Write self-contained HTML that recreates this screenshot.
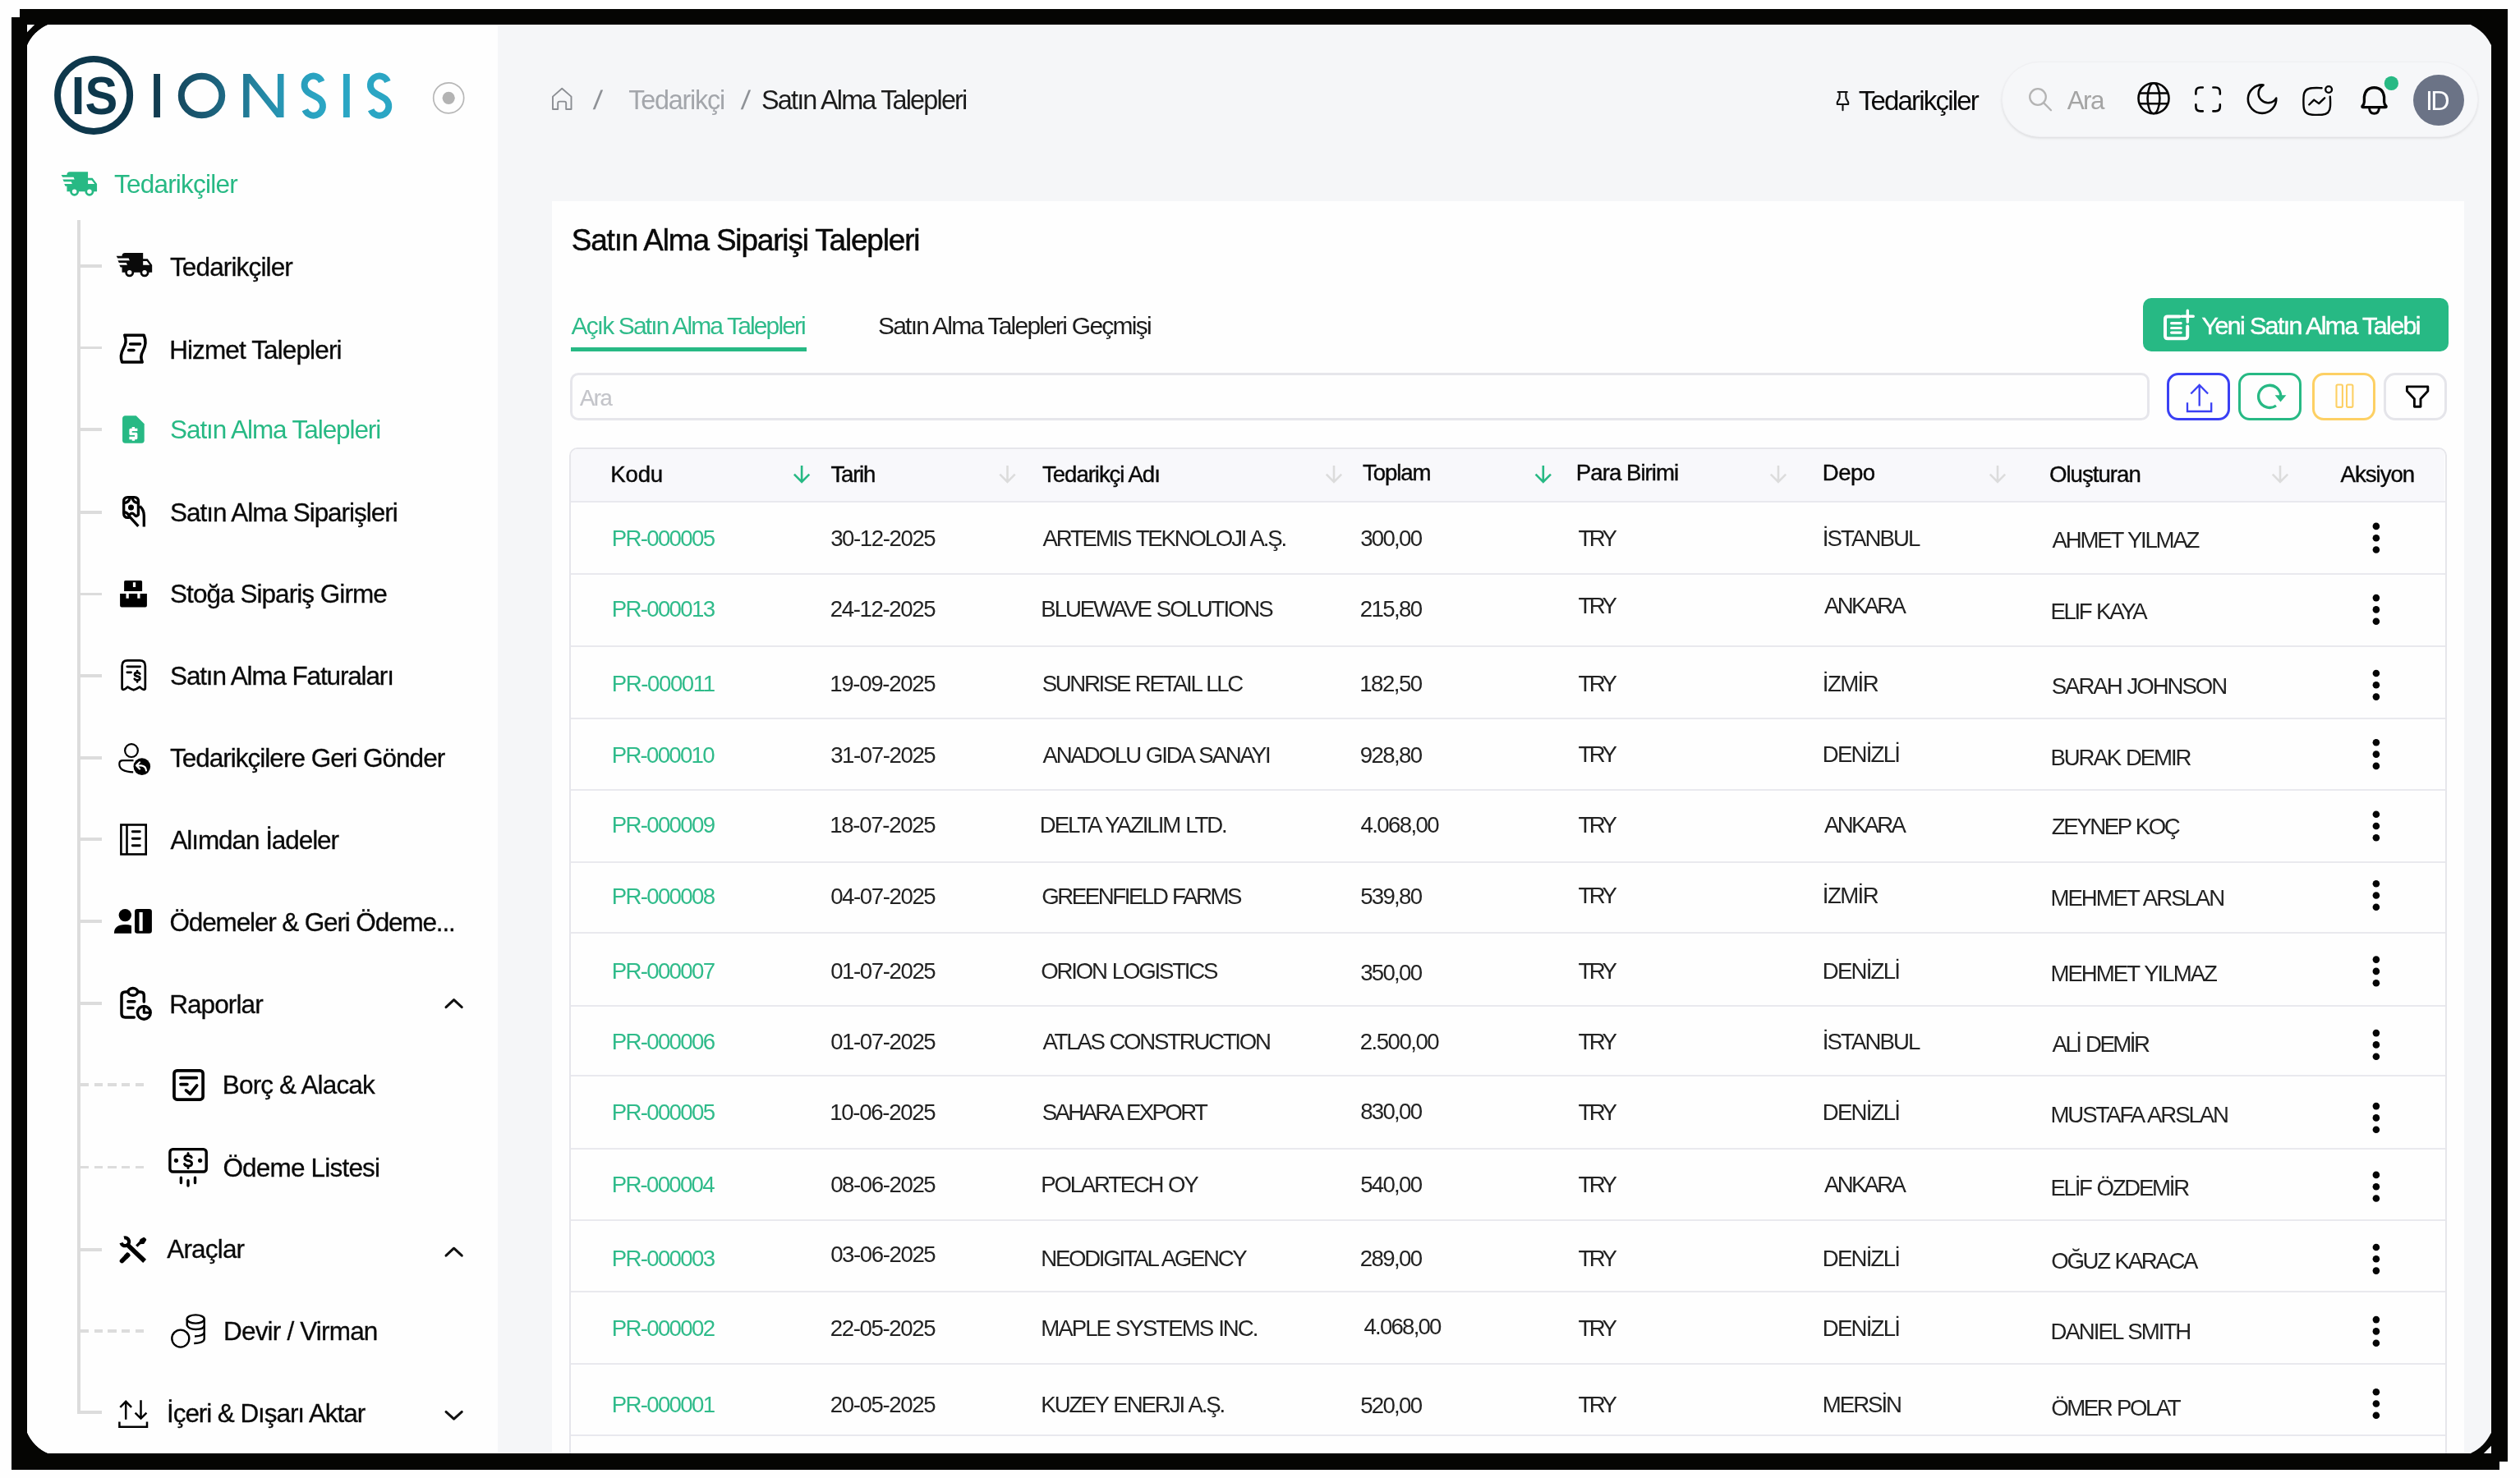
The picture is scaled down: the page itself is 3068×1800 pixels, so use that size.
<!DOCTYPE html>
<html lang="tr"><head><meta charset="utf-8"><title>Satın Alma Talepleri</title><style>
html,body{margin:0;padding:0}
body{width:3068px;height:1800px;background:#fefefe;overflow:hidden;position:relative;font-family:"Liberation Sans",sans-serif}
.a{position:absolute}
#fa{left:24px;top:11px;width:3029px;height:1769px;background:#050503}
#fb{left:14px;top:21px;width:3029px;height:1769px;background:#050503}
#app{left:29.2px;top:26.2px;width:3007.6px;height:1747.6px;border-radius:49px;background:#f5f6f8;overflow:hidden;transform:translateZ(0)}
#w{left:-29.2px;top:-26.2px;width:3068px;height:1800px}
#side{left:33px;top:30px;width:573px;height:1740px;background:#fefefe}
#card{left:672px;top:245px;width:2328px;height:1600px;background:#fefefe}
.t{position:absolute;white-space:nowrap;line-height:1}
.sk{transform:skewX(-6deg) scaleX(1.1);transform-origin:50% 60%}
.bar{position:absolute;background:#050503}
#txt{left:0;top:0;width:3068px;height:1800px;will-change:transform}
#vline{left:94.1px;top:268px;width:3.8px;height:1454.4px;background:#dcdcdc}
.br{position:absolute;left:97.9px;width:26px;height:3.9px;background:#dcdcdc}
.dbr{position:absolute;left:97.9px;width:77px;height:3.9px;background:repeating-linear-gradient(90deg,#dcdcdc 0,#dcdcdc 10.3px,transparent 10.3px,transparent 16.65px)}
#pill{left:2437px;top:75px;width:578px;height:90px;border-radius:46px;background:#f6f7f9;border:1px solid #f0f0f3;box-shadow:0 1.5px 3px rgba(0,0,0,.10)}
#avatar{left:2938px;top:90.8px;width:62px;height:62px;border-radius:50%;background:#6b7386}
#tabline{left:695px;top:423px;width:287.3px;height:5px;background:#27b984}
#newbtn{left:2609px;top:362.8px;width:372px;height:65px;border-radius:10px;background:#27b984}
#search{left:693.7px;top:453.8px;width:1917.6px;height:52.2px;border:3px solid #e6e6eb;border-radius:10px;background:#fefefe}
.ab{position:absolute;top:454px;width:70.8px;height:52px;border-radius:14px;border:3px solid #000;background:#fefefe}
#table{left:693.4px;top:545.2px;width:2281.8px;height:1300px;border:2px solid #e6e6eb;border-radius:10px;background:#fefefe;overflow:hidden}
#thead{left:0;top:0;width:2281px;height:64px;background:#f8f8fb}
.rl{position:absolute;left:695px;width:2282px;height:2px;background:#e9e9ee}
</style></head><body>
<div id="fa" class="a"></div><div id="fb" class="a"></div>
<div id="app" class="a"><div id="w" class="a">
<div id="side" class="a"></div><div id="vline" class="a"></div>
<div class="br" style="top:322.0px"></div>
<div class="br" style="top:421.6px"></div>
<div class="br" style="top:521.0px"></div>
<div class="br" style="top:622.0px"></div>
<div class="br" style="top:721.6px"></div>
<div class="br" style="top:821.0px"></div>
<div class="br" style="top:921.0px"></div>
<div class="br" style="top:1020.3px"></div>
<div class="br" style="top:1119.8px"></div>
<div class="br" style="top:1219.8px"></div>
<div class="br" style="top:1519.8px"></div>
<div class="br" style="top:1718.4px"></div>
<div class="dbr" style="top:1318.9px"></div>
<div class="dbr" style="top:1419.6px"></div>
<div class="dbr" style="top:1618.9px"></div>
<div class="a" style="left:606px;top:30px;width:2427px;height:1.3px;background:#fdfdfe"></div><div class="a" style="left:3031.7px;top:30px;width:1.3px;height:1740px;background:#fdfdfe"></div><div class="a" style="left:606px;top:1768.8px;width:2427px;height:1.2px;background:#fdfdfe"></div>
<div id="pill" class="a"></div><div id="avatar" class="a"></div>
<div id="card" class="a"></div>
<div id="tabline" class="a"></div><div id="newbtn" class="a"></div><div id="search" class="a"></div>
<div class="ab" style="left:2637.9px;border-color:#3a40f4"></div>
<div class="ab" style="left:2725.2px;border-color:#27b984"></div>
<div class="ab" style="left:2815px;border-color:#fdd064"></div>
<div class="ab" style="left:2902.3px;border-color:#e5e5ea"></div>
<div id="table" class="a"><div id="thead" class="a"></div></div>
<div class="rl" style="top:610.3px"></div>
<div class="rl" style="top:697.6px"></div>
<div class="rl" style="top:785.7px"></div>
<div class="rl" style="top:873.5px"></div>
<div class="rl" style="top:961.4px"></div>
<div class="rl" style="top:1048.8px"></div>
<div class="rl" style="top:1135.4px"></div>
<div class="rl" style="top:1223.8px"></div>
<div class="rl" style="top:1308.5px"></div>
<div class="rl" style="top:1397.6px"></div>
<div class="rl" style="top:1484.7px"></div>
<div class="rl" style="top:1571.9px"></div>
<div class="rl" style="top:1659.5px"></div>
<div class="rl" style="top:1746.6px"></div>
<svg class="a" style="left:0;top:0" width="3068" height="1800" viewBox="0 0 3068 1800"><defs><linearGradient id="lg" gradientUnits="userSpaceOnUse" x1="187" y1="0" x2="392" y2="0">
<stop offset="0" stop-color="#113a4e"/><stop offset="0.35" stop-color="#1c607a"/><stop offset="0.75" stop-color="#2795b3"/><stop offset="1" stop-color="#2ba6c4"/></linearGradient></defs>
<circle cx="114.1" cy="115.9" r="44.05" fill="none" stroke="#0e384c" stroke-width="7.9"/>
<text transform="translate(86.87,139.4) scale(0.922,1)" font-family="Liberation Sans" font-weight="bold" font-size="64.7" fill="#0e384c">IS</text>
<g fill="none" stroke="url(#lg)" stroke-width="7.9">
<path d="M191.05 90V143"/>
<ellipse cx="245.5" cy="116.5" rx="24.75" ry="23.75"/>
<path d="M421.85 90V143"/>
<path d="M391.6 99.4A10.9 10.9 0 1 0 373.9 111.3C377.4 114.8 386.2 117.9 389.7 121.4A11.3 11.3 0 1 1 371.3 133.8"/>
<path d="M471.9 99.4A10.9 10.9 0 1 0 454.2 111.3C457.7 114.8 466.5 117.9 470.0 121.4A11.3 11.3 0 1 1 451.6 133.8"/>
</g>
<path fill="url(#lg)" d="M296.1 90H304.6L337.9 132V90H345.5V143H337L303.6 101V143H296.1Z"/>
<circle cx="546.2" cy="119.3" r="18.5" fill="none" stroke="#b7b7b7" stroke-width="1.7"/><circle cx="546.2" cy="119.3" r="7.6" fill="#b3b3b3"/>
<path transform="translate(74.1,202.0) scale(1.832)" fill="#27b984" d="M3 13.5L2.25 12H7.5L6.9 10.5H2L1.25 9H9.05L8.45 7.5H1.11L.25 6H4A2 2 0 0 1 6 4H18V8H21L24 12V17H22A3 3 0 0 1 19 20A3 3 0 0 1 16 17H12A3 3 0 0 1 9 20A3 3 0 0 1 6 17H4V13.5H3M19 18.5A1.5 1.5 0 0 0 20.5 17A1.5 1.5 0 0 0 19 15.5A1.5 1.5 0 0 0 17.5 17A1.5 1.5 0 0 0 19 18.5M20.5 9.5H18V12H22.46L20.5 9.5M9 18.5A1.5 1.5 0 0 0 10.5 17A1.5 1.5 0 0 0 9 15.5A1.5 1.5 0 0 0 7.5 17A1.5 1.5 0 0 0 9 18.5Z"/>
<path transform="translate(141.2,300.7) scale(1.832)" fill="#0a0a0a" d="M3 13.5L2.25 12H7.5L6.9 10.5H2L1.25 9H9.05L8.45 7.5H1.11L.25 6H4A2 2 0 0 1 6 4H18V8H21L24 12V17H22A3 3 0 0 1 19 20A3 3 0 0 1 16 17H12A3 3 0 0 1 9 20A3 3 0 0 1 6 17H4V13.5H3M19 18.5A1.5 1.5 0 0 0 20.5 17A1.5 1.5 0 0 0 19 15.5A1.5 1.5 0 0 0 17.5 17A1.5 1.5 0 0 0 19 18.5M20.5 9.5H18V12H22.46L20.5 9.5M9 18.5A1.5 1.5 0 0 0 10.5 17A1.5 1.5 0 0 0 9 15.5A1.5 1.5 0 0 0 7.5 17A1.5 1.5 0 0 0 9 18.5Z"/>
<g transform="translate(130,380)" fill="none" stroke="#000" stroke-width="3.5" stroke-linecap="round" stroke-linejoin="round"><path d="M21.8 28.2H45.2C48.6 36 47 42 44 47.5C41 53 41 56.5 43.2 61.1H18.6C16.2 55 17.2 50 20.2 44.5C23.2 39 24.2 35 21.8 28.2Z"/><path d="M28.6 39H40.6M26.6 46.6H33"/></g>
<g transform="translate(142.4,502.8) scale(1.665,1.685)"><path fill="#27b984" d="M14 2H6C4.9 2 4 2.9 4 4V20C4 21.1 4.9 22 6 22H18C19.1 22 20 21.1 20 20V8Z"/><path fill="#fff" transform="translate(0,1.2)" d="M15 12h-4v1h3c.55 0 1 .45 1 1v3c0 .55-.45 1-1 1h-1v1h-2v-1H9v-2h4v-1h-3c-.55 0-1-.45-1-1v-3c0-.55.45-1 1-1h1V9h2v1h2v2z"/></g>
<g transform="translate(130,580)" fill="none" stroke="#000" stroke-width="3.3" stroke-linecap="round" stroke-linejoin="round"><path d="M38.4 46.6V30.5Q38.4 25.6 33.5 25.6H25.6Q20.7 25.6 20.7 30.5V45.5Q20.7 50.4 25.6 50.4H26.6"/><path d="M20.7 32.6Q27.8 32 28.3 25.6M38.4 32.6Q31.6 32 31 25.6M20.7 43.6Q26 44 27.3 49"/><path d="M27.8 46.8Q30.6 43.6 33.6 46.8Q36.4 50.6 38.4 46.6"/><path d="M27.2 48.6L38.4 60.8" stroke-linecap="butt"/><path d="M40.2 36.6Q45.3 41 45.3 48V61.6" stroke-linecap="butt"/></g><circle cx="159.5" cy="618" r="3.5" fill="#000"/>
<g transform="translate(130,680)" fill="#000"><path d="M22.6 26.9H41.6Q43.1 26.9 43.1 28.4V40H21.1V28.4Q21.1 26.9 22.6 26.9ZM31.9 29.2V34.9H35.1V29.2Z"/><path d="M16.1 43H23.5V48.7H26.8V43H37.3V48.7H40.5V43H48.9V57.5Q48.9 59.5 46.9 59.5H18.1Q16.1 59.5 16.1 57.5Z"/></g>
<g transform="translate(130,780)" fill="none" stroke="#000" stroke-width="2.7" stroke-linecap="round" stroke-linejoin="round"><path d="M18.6 58V31Q18.6 24.4 25.2 24.4H40.2Q46.8 24.4 46.8 31V58Q46.8 59.8 45 59.8Q43.5 59.8 40 56.6Q36.5 59 32.7 60.3Q29 59 25.5 56.6Q22 59.8 20.4 59.8Q18.6 59.8 18.6 58Z"/><path d="M24.8 31.8H40.6M24.8 38.8H29.6"/><path d="M40.3 40.6Q39.5 39.2 37.1 39.2Q34 39.2 34 41.3Q34 43.2 37.1 43.6Q40.4 44 40.4 46.2Q40.4 48.3 37.1 48.3Q34.6 48.3 33.8 46.8M37.1 37V39.2M37.1 48.3V50.4"/></g>
<g transform="translate(130,880)" fill="none" stroke="#000" stroke-width="2.2"><circle cx="30" cy="34.1" r="7.9"/><path d="M32.5 46.2H19.5Q15.3 46.2 15.3 50.4Q15.3 59.8 32.2 60.3"/><circle cx="42.8" cy="53.6" r="10.3" fill="#000" stroke="none"/><path d="M40 48.3L36 52.3L40 56.4M36.3 52.3H42Q47.5 52.8 48 58.4" stroke="#fff" stroke-width="2.2" stroke-linecap="round" stroke-linejoin="round"/></g>
<g transform="translate(130,980)" fill="none" stroke="#000" stroke-width="2.6"><rect x="17.4" y="24.5" width="30.3" height="35.9"/><path d="M24.5 24.5V60.4"/><path d="M31.3 32.8H40.3M31.3 41.2H40.3M31.3 49.7H40.3" stroke-linecap="round" stroke-width="2.9"/></g>
<g transform="translate(130,1080)" fill="#000"><circle cx="22.3" cy="34.6" r="7.7"/><path d="M8.9 56.8Q8.9 46 22.3 46Q27 46 30 47.2V56.8Z"/><path d="M37.2 26.9H51.7Q54.9 26.9 54.9 30.1V53.6Q54.9 56.8 51.7 56.8H37.2Q34 56.8 34 53.6V30.1Q34 26.9 37.2 26.9ZM39.5 31V53.8H43.7V31Z"/></g>
<g transform="translate(130,1180)" fill="none" stroke="#000" stroke-width="3.5" stroke-linecap="round" stroke-linejoin="round"><path d="M25.6 27.9H22.5Q18 27.9 18 32.4V54.5Q18 59 22.5 59H33.3M38 27.9H40.8Q45.3 27.9 45.3 32.4V40"/><ellipse cx="31.8" cy="27.9" rx="5.8" ry="4.3"/><path d="M25.9 39.7H33.9M25.9 47.5H32"/><circle cx="45.3" cy="53.3" r="7.9"/><path d="M45.3 47.6V53.3H51" stroke-width="3"/></g>
<g transform="translate(190,1280)" fill="none" stroke="#000" stroke-width="3.7" stroke-linecap="round" stroke-linejoin="round"><rect x="22" y="23.8" width="35.1" height="35.3" rx="3.6"/><path d="M30 32.7H49.3M30 40.6H37.9M36.4 47.9L41.6 52.2L49.7 41.9"/></g>
<g transform="translate(190,1380)" fill="none" stroke="#000" stroke-width="3.4" stroke-linecap="round" stroke-linejoin="round"><rect x="16.9" y="19.6" width="44.3" height="27.4" rx="3.6"/><path d="M30.4 54.2V60.6M39 57.7V64M47.5 54.2V60.6"/><path d="M43.2 29.6Q42.3 27.4 39 27.4Q34.9 27.4 34.9 30.3Q34.9 32.9 39 33.5Q43.5 34.1 43.5 37Q43.5 40 39 40Q35.6 40 34.6 37.6M39 24.6V27.4M39 40V42.6" stroke-width="3"/></g><circle cx="214.5" cy="1413.3" r="2.6" fill="#000"/><circle cx="243.6" cy="1413.3" r="2.6" fill="#000"/>
<g transform="translate(130,1480)" fill="none" stroke="#000"><path d="M26 36.8L46.1 55.9" stroke-width="5.6"/><path d="M21.0 27.5A4.9 4.9 0 1 1 17.5 33.7" stroke-width="4.3" fill="none"/><path d="M18.5 55.6L25.5 48.5" stroke-width="5.6" stroke-linecap="round"/><path d="M23 51L26.9 47" stroke-width="5.6"/><path d="M36.3 37.6L40.2 33.6" stroke-width="3.2"/><path d="M40 34L41.6 30.2L45.2 28.2L46.9 29.8L44.4 33.8Z" stroke-width="2.6" fill="#000" stroke-linejoin="round"/></g>
<g transform="translate(190,1580)" fill="none" stroke="#000" stroke-width="2.4"><ellipse cx="48.2" cy="26.5" rx="10.5" ry="5.1"/><path d="M37.7 26.5V34Q40 39 48.2 39Q58.7 39 58.7 33.5M58.7 26.5V50.5Q58.5 55.5 46.2 56M47 47.5Q58.5 47 58.7 42"/><circle cx="29.8" cy="50.1" r="10.5"/></g>
<g transform="translate(130,1680)" fill="none" stroke="#000" stroke-width="2.5"><path d="M23.2 48.7V27M16.3 33.9L23.2 26.9L30.1 33.9"/><path d="M41.5 25.2V47M34.6 40.7L41.5 47.6L48.4 40.7"/><path d="M15.4 51.4V57.8H49V51.4"/></g>
<g fill="none" stroke="#111" stroke-width="3" stroke-linecap="round" stroke-linejoin="round"><path d="M543 1226.6L552.6 1217.6L562.3 1226.6"/><path d="M543 1529.2L552.6 1520.2L562.3 1529.2"/><path d="M543 1719.4L552.6 1728.2L562.3 1719.4"/></g>
<path fill="none" stroke="#8b8e93" stroke-width="1.9" stroke-linejoin="round" d="M673 117.6L684.2 107.8L695.5 117.6V133H689.2V125.6Q689.2 123.6 687.2 123.6H681.2Q679.2 123.6 679.2 125.6V133H673Z"/>
<path fill="none" stroke="#111" stroke-width="2.1" stroke-linejoin="round" stroke-linecap="round" d="M2237.6 112H2248.8M2239.6 112V119.5L2236.8 124.5V127H2250.2V124.5L2247.4 119.5V112M2243.5 127V134.2"/>
<g fill="none" stroke="#b4b4b4" stroke-width="2.3" stroke-linecap="round"><circle cx="2481" cy="118" r="9.8"/><path d="M2488.2 125.4L2497 134.2"/></g>
<g fill="none" stroke="#050505" stroke-width="2.6"><circle cx="2622" cy="119.8" r="18.5"/><ellipse cx="2622" cy="119.8" rx="7.4" ry="18.5"/><path d="M2604.8 113.5H2639.2M2604.8 126.2H2639.2"/></g>
<g fill="none" stroke="#050505" stroke-width="2.6" stroke-linecap="round"><path d="M2673.4 114.6V112Q2673.4 106.5 2678.9 106.5H2681.8M2694.4 106.5H2697.3Q2702.8 106.5 2702.8 112V114.6M2702.8 127.4V130Q2702.8 135.4 2697.3 135.4H2694.4M2681.8 135.4H2678.9Q2673.4 135.4 2673.4 130V127.4"/></g>
<path fill="none" stroke="#050505" stroke-width="2.6" stroke-linejoin="round" d="M2755.6 103.5A17.2 17.2 0 1 0 2771.2 119.6A11.6 11.6 0 1 1 2755.6 103.5Z"/>
<g fill="none" stroke="#050505" stroke-width="2.4" stroke-linecap="round" stroke-linejoin="round"><path d="M2826.6 107.2Q2820 106.9 2815 107.2Q2805 107.6 2804.6 117.5Q2804.2 123.5 2804.6 129.5Q2805 139.3 2815 139.7Q2821 140.1 2827 139.7Q2836.6 139.3 2837 129.5Q2837.3 123.5 2836.8 117.6"/><circle cx="2835.1" cy="109" r="3.9"/><path d="M2811.3 127.5L2817.2 121.6L2823.2 126.1L2830.1 119.3"/></g>
<g fill="none" stroke="#050505" stroke-width="3.3" stroke-linejoin="round" stroke-linecap="round"><path d="M2890.5 106.6Q2901.2 106.8 2902.6 118V124Q2902.8 127.5 2905 129.3Q2905.6 130.6 2904 130.6H2877Q2875.4 130.6 2876 129.3Q2878.2 127.5 2878.4 124V118Q2879.8 106.8 2890.5 106.6Z"/><path d="M2884.6 132Q2885 138.2 2890.5 138.2Q2896 138.2 2896.4 132" stroke-width="3"/></g>
<circle cx="2911.4" cy="101.4" r="8.6" fill="#27b984"/>
<path fill="none" stroke="#27b984" stroke-width="2.6" d="M976.1 567V586.6M966.9 577.6L976.1 586.8L985.3000000000001 577.6"/>
<path fill="none" stroke="#dcdcdc" stroke-width="2.6" d="M1226.5 567V586.6M1217.3 577.6L1226.5 586.8L1235.7 577.6"/>
<path fill="none" stroke="#dcdcdc" stroke-width="2.6" d="M1624 567V586.6M1614.8 577.6L1624 586.8L1633.2 577.6"/>
<path fill="none" stroke="#27b984" stroke-width="2.6" d="M1878.8 567V586.6M1869.6 577.6L1878.8 586.8L1888.0 577.6"/>
<path fill="none" stroke="#dcdcdc" stroke-width="2.6" d="M2165 567V586.6M2155.8 577.6L2165 586.8L2174.2 577.6"/>
<path fill="none" stroke="#dcdcdc" stroke-width="2.6" d="M2432 567V586.6M2422.8 577.6L2432 586.8L2441.2 577.6"/>
<path fill="none" stroke="#dcdcdc" stroke-width="2.6" d="M2776 567V586.6M2766.8 577.6L2776 586.8L2785.2 577.6"/>
<g fill="none" stroke="#fff" stroke-linecap="round" stroke-linejoin="round"><path stroke-width="4" d="M2653.5 385.5H2639Q2636 385.5 2636 388.5V409.2Q2636 412.2 2639 412.2H2660.2Q2663.2 412.2 2663.2 409.2V397.5"/><path stroke-width="3.2" d="M2643.6 393.6H2655.2M2643.6 399.5H2655.2M2643.6 405.1H2655.2"/><path stroke-width="3.4" d="M2663.3 378.3V392.3M2656.3 385.3H2670.3"/></g>
<g fill="none" stroke="#3a40f4" stroke-width="2.3"><path d="M2677.7 494.6V469.4M2667.3 479.5L2677.7 469L2688.1 479.5"/><path d="M2663 490.2V501H2692.2V490.2"/></g>
<g><path fill="none" stroke="#27b984" stroke-width="3.3" d="M2776.8 482.9A13.6 13.6 0 1 0 2771 494"/><path fill="#27b984" d="M2769.6 481.2H2783.4L2776.5 489.6Z"/></g>
<g fill="none" stroke="#fdd064" stroke-width="2.1"><rect x="2844.5" y="468.5" width="7.4" height="27.4" rx="1.6"/><rect x="2857" y="468.5" width="7.4" height="27.4" rx="1.6"/></g>
<path fill="none" stroke="#050505" stroke-width="2.9" stroke-linejoin="round" d="M2930.4 470.9H2955.8V476.3L2947 485.8V495.2H2939.4V485.8L2930.4 476.3Z"/>
<circle cx="2892.9" cy="640.9" r="4.3" fill="#050505"/>
<circle cx="2892.9" cy="655.2" r="4.3" fill="#050505"/>
<circle cx="2892.9" cy="669.5" r="4.3" fill="#050505"/>
<circle cx="2892.9" cy="728.1" r="4.3" fill="#050505"/>
<circle cx="2892.9" cy="742.4" r="4.3" fill="#050505"/>
<circle cx="2892.9" cy="756.7" r="4.3" fill="#050505"/>
<circle cx="2892.9" cy="820.0" r="4.3" fill="#050505"/>
<circle cx="2892.9" cy="834.3" r="4.3" fill="#050505"/>
<circle cx="2892.9" cy="848.6" r="4.3" fill="#050505"/>
<circle cx="2892.9" cy="904.3" r="4.3" fill="#050505"/>
<circle cx="2892.9" cy="918.6" r="4.3" fill="#050505"/>
<circle cx="2892.9" cy="932.9" r="4.3" fill="#050505"/>
<circle cx="2892.9" cy="991.7" r="4.3" fill="#050505"/>
<circle cx="2892.9" cy="1006.0" r="4.3" fill="#050505"/>
<circle cx="2892.9" cy="1020.3" r="4.3" fill="#050505"/>
<circle cx="2892.9" cy="1076.2" r="4.3" fill="#050505"/>
<circle cx="2892.9" cy="1090.5" r="4.3" fill="#050505"/>
<circle cx="2892.9" cy="1104.8" r="4.3" fill="#050505"/>
<circle cx="2892.9" cy="1168.6" r="4.3" fill="#050505"/>
<circle cx="2892.9" cy="1182.9" r="4.3" fill="#050505"/>
<circle cx="2892.9" cy="1197.2" r="4.3" fill="#050505"/>
<circle cx="2892.9" cy="1258.1" r="4.3" fill="#050505"/>
<circle cx="2892.9" cy="1272.4" r="4.3" fill="#050505"/>
<circle cx="2892.9" cy="1286.7" r="4.3" fill="#050505"/>
<circle cx="2892.9" cy="1347.1" r="4.3" fill="#050505"/>
<circle cx="2892.9" cy="1361.4" r="4.3" fill="#050505"/>
<circle cx="2892.9" cy="1375.7" r="4.3" fill="#050505"/>
<circle cx="2892.9" cy="1430.9" r="4.3" fill="#050505"/>
<circle cx="2892.9" cy="1445.2" r="4.3" fill="#050505"/>
<circle cx="2892.9" cy="1459.5" r="4.3" fill="#050505"/>
<circle cx="2892.9" cy="1519.0" r="4.3" fill="#050505"/>
<circle cx="2892.9" cy="1533.3" r="4.3" fill="#050505"/>
<circle cx="2892.9" cy="1547.6" r="4.3" fill="#050505"/>
<circle cx="2892.9" cy="1607.1" r="4.3" fill="#050505"/>
<circle cx="2892.9" cy="1621.4" r="4.3" fill="#050505"/>
<circle cx="2892.9" cy="1635.7" r="4.3" fill="#050505"/>
<circle cx="2892.9" cy="1695.2" r="4.3" fill="#050505"/>
<circle cx="2892.9" cy="1709.5" r="4.3" fill="#050505"/>
<circle cx="2892.9" cy="1723.8" r="4.3" fill="#050505"/></svg>
<div id="txt" class="a"><span class="t" style="left:139.01px;top:209px;font-size:31.5px;letter-spacing:-0.787px;color:#27b984">Tedarikçiler</span>
<span class="t" style="left:206.91px;top:310px;font-size:31.5px;letter-spacing:-0.850px;color:#0a0a0a;-webkit-text-stroke:0.3px #0a0a0a">Tedarikçiler</span>
<span class="t" style="left:206.14px;top:411px;font-size:31.5px;letter-spacing:-0.875px;color:#0a0a0a;-webkit-text-stroke:0.3px #0a0a0a">Hizmet Talepleri</span>
<span class="t" style="left:207.02px;top:508px;font-size:31.5px;letter-spacing:-1.083px;color:#27b984">Satın Alma Talepleri</span>
<span class="t" style="left:207.02px;top:609px;font-size:31.5px;letter-spacing:-1.036px;color:#0a0a0a;-webkit-text-stroke:0.3px #0a0a0a">Satın Alma Siparişleri</span>
<span class="t" style="left:207.02px;top:708px;font-size:31.5px;letter-spacing:-0.950px;color:#0a0a0a;-webkit-text-stroke:0.3px #0a0a0a">Stoğa Sipariş Girme</span>
<span class="t" style="left:207.02px;top:808px;font-size:31.5px;letter-spacing:-1.149px;color:#0a0a0a;-webkit-text-stroke:0.3px #0a0a0a">Satın Alma Faturaları</span>
<span class="t" style="left:206.91px;top:908px;font-size:31.5px;letter-spacing:-0.985px;color:#0a0a0a;-webkit-text-stroke:0.3px #0a0a0a">Tedarikçilere Geri Gönder</span>
<span class="t" style="left:207.40px;top:1008px;font-size:31.5px;letter-spacing:-1.069px;color:#0a0a0a;-webkit-text-stroke:0.3px #0a0a0a">Alımdan İadeler</span>
<span class="t" style="left:206.52px;top:1108px;font-size:31.5px;letter-spacing:-1.144px;color:#0a0a0a;-webkit-text-stroke:0.3px #0a0a0a">Ödemeler &amp; Geri Ödeme...</span>
<span class="t" style="left:206.14px;top:1208px;font-size:31.5px;letter-spacing:-0.898px;color:#0a0a0a;-webkit-text-stroke:0.3px #0a0a0a">Raporlar</span>
<span class="t" style="left:270.84px;top:1306px;font-size:31.5px;letter-spacing:-0.847px;color:#0a0a0a;-webkit-text-stroke:0.3px #0a0a0a">Borç &amp; Alacak</span>
<span class="t" style="left:271.42px;top:1407px;font-size:31.5px;letter-spacing:-0.807px;color:#0a0a0a;-webkit-text-stroke:0.3px #0a0a0a">Ödeme Listesi</span>
<span class="t" style="left:203.30px;top:1506px;font-size:31.5px;letter-spacing:-0.837px;color:#0a0a0a;-webkit-text-stroke:0.3px #0a0a0a">Araçlar</span>
<span class="t" style="left:272.04px;top:1606px;font-size:31.5px;letter-spacing:-0.818px;color:#0a0a0a;-webkit-text-stroke:0.3px #0a0a0a">Devir / Virman</span>
<span class="t" style="left:203.04px;top:1706px;font-size:31.5px;letter-spacing:-1.078px;color:#0a0a0a;-webkit-text-stroke:0.3px #0a0a0a">İçeri &amp; Dışarı Aktar</span>
<span class="t sk" style="left:722.80px;top:106px;font-size:32.4px;letter-spacing:0.000px;color:#8e9196">/</span>
<span class="t" style="left:765.29px;top:106px;font-size:32.4px;letter-spacing:-1.250px;color:#a3a6ab">Tedarikçi</span>
<span class="t sk" style="left:903.00px;top:106px;font-size:32.4px;letter-spacing:0.000px;color:#8e9196">/</span>
<span class="t" style="left:926.99px;top:106px;font-size:32.4px;letter-spacing:-1.810px;color:#1c1c1c">Satın Alma Talepleri</span>
<span class="t" style="left:2262.78px;top:106px;font-size:33.1px;letter-spacing:-1.847px;color:#0a0a0a">Tedarikçiler</span>
<span class="t" style="left:2516.70px;top:107px;font-size:31.5px;letter-spacing:-1.609px;color:#a4a4a4">Ara</span>
<span class="t" style="left:2952.98px;top:107px;font-size:32.3px;letter-spacing:-2.757px;color:#fbfbfd">ID</span>
<span class="t" style="left:695.75px;top:275px;font-size:36.9px;letter-spacing:-1.136px;color:#0a0a0a;-webkit-text-stroke:0.5px #0a0a0a">Satın Alma Siparişi Talepleri</span>
<span class="t" style="left:695.50px;top:382px;font-size:30px;letter-spacing:-1.875px;color:#2fbb8a">Açık Satın Alma Talepleri</span>
<span class="t" style="left:1068.96px;top:382px;font-size:30px;letter-spacing:-1.765px;color:#1c1c1c">Satın Alma Talepleri Geçmişi</span>
<span class="t" style="left:2680.53px;top:381px;font-size:30.4px;letter-spacing:-1.609px;color:#ffffff;-webkit-text-stroke:0.45px #ffffff">Yeni Satın Alma Talebi</span>
<span class="t" style="left:706.00px;top:471px;font-size:27.4px;letter-spacing:-1.456px;color:#c3c4c9;-webkit-text-stroke:0.2px #c3c4c9">Ara</span>
<span class="t" style="left:743.34px;top:564px;font-size:27.6px;letter-spacing:-0.217px;color:#0a0a0a;-webkit-text-stroke:0.4px #0a0a0a">Kodu</span>
<span class="t" style="left:1011.47px;top:564px;font-size:27.6px;letter-spacing:-1.235px;color:#0a0a0a;-webkit-text-stroke:0.4px #0a0a0a">Tarih</span>
<span class="t" style="left:1269.07px;top:564px;font-size:27.6px;letter-spacing:-1.056px;color:#0a0a0a;-webkit-text-stroke:0.4px #0a0a0a">Tedarikçi Adı</span>
<span class="t" style="left:1659.07px;top:562px;font-size:27.6px;letter-spacing:-1.122px;color:#0a0a0a;-webkit-text-stroke:0.4px #0a0a0a">Toplam</span>
<span class="t" style="left:1918.84px;top:562px;font-size:27.6px;letter-spacing:-0.958px;color:#0a0a0a;-webkit-text-stroke:0.4px #0a0a0a">Para Birimi</span>
<span class="t" style="left:2218.84px;top:562px;font-size:27.6px;letter-spacing:-0.602px;color:#0a0a0a;-webkit-text-stroke:0.4px #0a0a0a">Depo</span>
<span class="t" style="left:2494.91px;top:564px;font-size:27.6px;letter-spacing:-0.977px;color:#0a0a0a;-webkit-text-stroke:0.4px #0a0a0a">Oluşturan</span>
<span class="t" style="left:2849.50px;top:564px;font-size:27.6px;letter-spacing:-0.998px;color:#0a0a0a;-webkit-text-stroke:0.4px #0a0a0a">Aksiyon</span>
<span class="t" style="left:744.74px;top:642px;font-size:27.6px;letter-spacing:-1.669px;color:#2fbb8a">PR-000005</span>
<span class="t" style="left:1011.14px;top:642px;font-size:27.6px;letter-spacing:-1.400px;color:#222222">30-12-2025</span>
<span class="t" style="left:1269.50px;top:642px;font-size:27.6px;letter-spacing:-2.195px;color:#222222;word-spacing:1.38px">ARTEMIS TEKNOLOJI A.Ş.</span>
<span class="t" style="left:1656.14px;top:642px;font-size:27.6px;letter-spacing:-1.693px;color:#222222">300,00</span>
<span class="t" style="left:1921.57px;top:642px;font-size:27.6px;letter-spacing:-3.687px;color:#222222">TRY</span>
<span class="t" style="left:2218.84px;top:642px;font-size:27.6px;letter-spacing:-1.925px;color:#222222">İSTANBUL</span>
<span class="t" style="left:2498.60px;top:644px;font-size:27.6px;letter-spacing:-2.224px;color:#222222;word-spacing:1.38px">AHMET YILMAZ</span>
<span class="t" style="left:744.74px;top:728px;font-size:27.6px;letter-spacing:-1.669px;color:#2fbb8a">PR-000013</span>
<span class="t" style="left:1010.71px;top:728px;font-size:27.6px;letter-spacing:-1.352px;color:#222222">24-12-2025</span>
<span class="t" style="left:1267.34px;top:728px;font-size:27.6px;letter-spacing:-2.090px;color:#222222;word-spacing:1.38px">BLUEWAVE SOLUTIONS</span>
<span class="t" style="left:1655.71px;top:728px;font-size:27.6px;letter-spacing:-1.607px;color:#222222">215,80</span>
<span class="t" style="left:1921.57px;top:724px;font-size:27.6px;letter-spacing:-3.687px;color:#222222">TRY</span>
<span class="t" style="left:2221.00px;top:724px;font-size:27.6px;letter-spacing:-2.727px;color:#222222">ANKARA</span>
<span class="t" style="left:2496.44px;top:731px;font-size:27.6px;letter-spacing:-2.331px;color:#222222;word-spacing:1.38px">ELIF KAYA</span>
<span class="t" style="left:744.74px;top:819px;font-size:27.6px;letter-spacing:-1.413px;color:#2fbb8a">PR-000011</span>
<span class="t" style="left:1010.27px;top:819px;font-size:27.6px;letter-spacing:-1.304px;color:#222222">19-09-2025</span>
<span class="t" style="left:1268.64px;top:819px;font-size:27.6px;letter-spacing:-2.316px;color:#222222;word-spacing:1.38px">SUNRISE RETAIL LLC</span>
<span class="t" style="left:1655.28px;top:819px;font-size:27.6px;letter-spacing:-1.521px;color:#222222">182,50</span>
<span class="t" style="left:1921.57px;top:819px;font-size:27.6px;letter-spacing:-3.687px;color:#222222">TRY</span>
<span class="t" style="left:2218.84px;top:819px;font-size:27.6px;letter-spacing:-1.576px;color:#222222">İZMİR</span>
<span class="t" style="left:2497.74px;top:822px;font-size:27.6px;letter-spacing:-2.047px;color:#222222;word-spacing:1.38px">SARAH JOHNSON</span>
<span class="t" style="left:744.74px;top:906px;font-size:27.6px;letter-spacing:-1.723px;color:#2fbb8a">PR-000010</span>
<span class="t" style="left:1011.14px;top:906px;font-size:27.6px;letter-spacing:-1.400px;color:#222222">31-07-2025</span>
<span class="t" style="left:1269.50px;top:906px;font-size:27.6px;letter-spacing:-2.139px;color:#222222;word-spacing:1.38px">ANADOLU GIDA SANAYI</span>
<span class="t" style="left:1655.71px;top:906px;font-size:27.6px;letter-spacing:-1.607px;color:#222222">928,80</span>
<span class="t" style="left:1921.57px;top:905px;font-size:27.6px;letter-spacing:-3.687px;color:#222222">TRY</span>
<span class="t" style="left:2218.84px;top:905px;font-size:27.6px;letter-spacing:-1.795px;color:#222222">DENİZLİ</span>
<span class="t" style="left:2496.44px;top:909px;font-size:27.6px;letter-spacing:-2.096px;color:#222222;word-spacing:1.38px">BURAK DEMIR</span>
<span class="t" style="left:744.74px;top:991px;font-size:27.6px;letter-spacing:-1.669px;color:#2fbb8a">PR-000009</span>
<span class="t" style="left:1010.27px;top:991px;font-size:27.6px;letter-spacing:-1.304px;color:#222222">18-07-2025</span>
<span class="t" style="left:1265.84px;top:991px;font-size:27.6px;letter-spacing:-2.063px;color:#222222;word-spacing:1.38px">DELTA YAZILIM LTD.</span>
<span class="t" style="left:1656.57px;top:991px;font-size:27.6px;letter-spacing:-1.617px;color:#222222">4.068,00</span>
<span class="t" style="left:1921.57px;top:991px;font-size:27.6px;letter-spacing:-3.687px;color:#222222">TRY</span>
<span class="t" style="left:2221.00px;top:991px;font-size:27.6px;letter-spacing:-2.727px;color:#222222">ANKARA</span>
<span class="t" style="left:2497.74px;top:993px;font-size:27.6px;letter-spacing:-2.418px;color:#222222;word-spacing:1.38px">ZEYNEP KOÇ</span>
<span class="t" style="left:744.74px;top:1078px;font-size:27.6px;letter-spacing:-1.669px;color:#2fbb8a">PR-000008</span>
<span class="t" style="left:1011.14px;top:1078px;font-size:27.6px;letter-spacing:-1.400px;color:#222222">04-07-2025</span>
<span class="t" style="left:1268.21px;top:1078px;font-size:27.6px;letter-spacing:-2.409px;color:#222222;word-spacing:1.38px">GREENFIELD FARMS</span>
<span class="t" style="left:1656.14px;top:1078px;font-size:27.6px;letter-spacing:-1.693px;color:#222222">539,80</span>
<span class="t" style="left:1921.57px;top:1077px;font-size:27.6px;letter-spacing:-3.687px;color:#222222">TRY</span>
<span class="t" style="left:2218.84px;top:1077px;font-size:27.6px;letter-spacing:-1.576px;color:#222222">İZMİR</span>
<span class="t" style="left:2496.44px;top:1080px;font-size:27.6px;letter-spacing:-2.023px;color:#222222;word-spacing:1.38px">MEHMET ARSLAN</span>
<span class="t" style="left:744.74px;top:1169px;font-size:27.6px;letter-spacing:-1.669px;color:#2fbb8a">PR-000007</span>
<span class="t" style="left:1011.14px;top:1169px;font-size:27.6px;letter-spacing:-1.400px;color:#222222">01-07-2025</span>
<span class="t" style="left:1267.31px;top:1169px;font-size:27.6px;letter-spacing:-2.178px;color:#222222;word-spacing:1.38px">ORION LOGISTICS</span>
<span class="t" style="left:1656.14px;top:1171px;font-size:27.6px;letter-spacing:-1.693px;color:#222222">350,00</span>
<span class="t" style="left:1921.57px;top:1169px;font-size:27.6px;letter-spacing:-3.687px;color:#222222">TRY</span>
<span class="t" style="left:2218.84px;top:1169px;font-size:27.6px;letter-spacing:-1.795px;color:#222222">DENİZLİ</span>
<span class="t" style="left:2496.44px;top:1172px;font-size:27.6px;letter-spacing:-1.983px;color:#222222;word-spacing:1.38px">MEHMET YILMAZ</span>
<span class="t" style="left:744.74px;top:1255px;font-size:27.6px;letter-spacing:-1.669px;color:#2fbb8a">PR-000006</span>
<span class="t" style="left:1011.14px;top:1255px;font-size:27.6px;letter-spacing:-1.400px;color:#222222">01-07-2025</span>
<span class="t" style="left:1269.50px;top:1255px;font-size:27.6px;letter-spacing:-2.253px;color:#222222;word-spacing:1.38px">ATLAS CONSTRUCTION</span>
<span class="t" style="left:1655.71px;top:1255px;font-size:27.6px;letter-spacing:-1.493px;color:#222222">2.500,00</span>
<span class="t" style="left:1921.57px;top:1255px;font-size:27.6px;letter-spacing:-3.687px;color:#222222">TRY</span>
<span class="t" style="left:2218.84px;top:1255px;font-size:27.6px;letter-spacing:-1.925px;color:#222222">İSTANBUL</span>
<span class="t" style="left:2498.60px;top:1258px;font-size:27.6px;letter-spacing:-2.506px;color:#222222;word-spacing:1.38px">ALİ DEMİR</span>
<span class="t" style="left:744.74px;top:1341px;font-size:27.6px;letter-spacing:-1.669px;color:#2fbb8a">PR-000005</span>
<span class="t" style="left:1010.27px;top:1341px;font-size:27.6px;letter-spacing:-1.304px;color:#222222">10-06-2025</span>
<span class="t" style="left:1268.64px;top:1341px;font-size:27.6px;letter-spacing:-2.650px;color:#222222;word-spacing:1.38px">SAHARA EXPORT</span>
<span class="t" style="left:1656.14px;top:1340px;font-size:27.6px;letter-spacing:-1.693px;color:#222222">830,00</span>
<span class="t" style="left:1921.57px;top:1341px;font-size:27.6px;letter-spacing:-3.687px;color:#222222">TRY</span>
<span class="t" style="left:2218.84px;top:1341px;font-size:27.6px;letter-spacing:-1.795px;color:#222222">DENİZLİ</span>
<span class="t" style="left:2496.44px;top:1344px;font-size:27.6px;letter-spacing:-2.091px;color:#222222;word-spacing:1.38px">MUSTAFA ARSLAN</span>
<span class="t" style="left:744.74px;top:1429px;font-size:27.6px;letter-spacing:-1.723px;color:#2fbb8a">PR-000004</span>
<span class="t" style="left:1011.14px;top:1429px;font-size:27.6px;letter-spacing:-1.400px;color:#222222">08-06-2025</span>
<span class="t" style="left:1267.34px;top:1429px;font-size:27.6px;letter-spacing:-2.243px;color:#222222;word-spacing:1.38px">POLARTECH OY</span>
<span class="t" style="left:1656.14px;top:1429px;font-size:27.6px;letter-spacing:-1.693px;color:#222222">540,00</span>
<span class="t" style="left:1921.57px;top:1429px;font-size:27.6px;letter-spacing:-3.687px;color:#222222">TRY</span>
<span class="t" style="left:2221.00px;top:1429px;font-size:27.6px;letter-spacing:-2.727px;color:#222222">ANKARA</span>
<span class="t" style="left:2496.44px;top:1433px;font-size:27.6px;letter-spacing:-2.262px;color:#222222;word-spacing:1.38px">ELİF ÖZDEMİR</span>
<span class="t" style="left:744.74px;top:1519px;font-size:27.6px;letter-spacing:-1.669px;color:#2fbb8a">PR-000003</span>
<span class="t" style="left:1011.14px;top:1514px;font-size:27.6px;letter-spacing:-1.400px;color:#222222">03-06-2025</span>
<span class="t" style="left:1267.34px;top:1519px;font-size:27.6px;letter-spacing:-2.298px;color:#222222;word-spacing:1.38px">NEODIGITAL AGENCY</span>
<span class="t" style="left:1655.71px;top:1519px;font-size:27.6px;letter-spacing:-1.607px;color:#222222">289,00</span>
<span class="t" style="left:1921.57px;top:1519px;font-size:27.6px;letter-spacing:-3.687px;color:#222222">TRY</span>
<span class="t" style="left:2218.84px;top:1519px;font-size:27.6px;letter-spacing:-1.795px;color:#222222">DENİZLİ</span>
<span class="t" style="left:2497.31px;top:1522px;font-size:27.6px;letter-spacing:-2.302px;color:#222222;word-spacing:1.38px">OĞUZ KARACA</span>
<span class="t" style="left:744.74px;top:1604px;font-size:27.6px;letter-spacing:-1.669px;color:#2fbb8a">PR-000002</span>
<span class="t" style="left:1010.71px;top:1604px;font-size:27.6px;letter-spacing:-1.352px;color:#222222">22-05-2025</span>
<span class="t" style="left:1267.34px;top:1604px;font-size:27.6px;letter-spacing:-1.977px;color:#222222;word-spacing:1.38px">MAPLE SYSTEMS INC.</span>
<span class="t" style="left:1660.57px;top:1602px;font-size:27.6px;letter-spacing:-1.788px;color:#222222">4.068,00</span>
<span class="t" style="left:1921.57px;top:1604px;font-size:27.6px;letter-spacing:-3.687px;color:#222222">TRY</span>
<span class="t" style="left:2218.84px;top:1604px;font-size:27.6px;letter-spacing:-1.795px;color:#222222">DENİZLİ</span>
<span class="t" style="left:2496.44px;top:1608px;font-size:27.6px;letter-spacing:-1.973px;color:#222222;word-spacing:1.38px">DANIEL SMITH</span>
<span class="t" style="left:744.74px;top:1697px;font-size:27.6px;letter-spacing:-1.669px;color:#2fbb8a">PR-000001</span>
<span class="t" style="left:1010.71px;top:1697px;font-size:27.6px;letter-spacing:-1.352px;color:#222222">20-05-2025</span>
<span class="t" style="left:1267.34px;top:1697px;font-size:27.6px;letter-spacing:-2.086px;color:#222222;word-spacing:1.38px">KUZEY ENERJI A.Ş.</span>
<span class="t" style="left:1656.14px;top:1698px;font-size:27.6px;letter-spacing:-1.693px;color:#222222">520,00</span>
<span class="t" style="left:1921.57px;top:1697px;font-size:27.6px;letter-spacing:-3.687px;color:#222222">TRY</span>
<span class="t" style="left:2218.84px;top:1697px;font-size:27.6px;letter-spacing:-2.027px;color:#222222">MERSİN</span>
<span class="t" style="left:2497.31px;top:1701px;font-size:27.6px;letter-spacing:-2.437px;color:#222222;word-spacing:1.38px">ÖMER POLAT</span></div>
</div></div>
<div class="bar" style="left:24px;top:11px;width:3029px;height:19px"></div><div class="bar" style="left:14px;top:21px;width:19px;height:1769px"></div><div class="bar" style="left:3033px;top:11px;width:20px;height:1769px"></div><div class="bar" style="left:14px;top:1770px;width:3029px;height:20px"></div>
<svg class="a" style="left:0;top:0" width="3068" height="1800"><path d="M33 30H42.2L33 39.2Z" fill="#fefefe"/><path d="M3033 1770H3023.8L3033 1760.8Z" fill="#f5f6f8"/></svg>
</body></html>
